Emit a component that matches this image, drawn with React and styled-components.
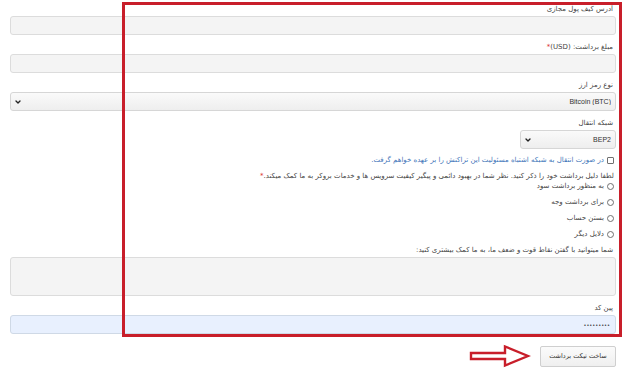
import styled, { createGlobalStyle } from "styled-components";
import { ChevronDown } from "lucide-react";

const GlobalStyle = createGlobalStyle`
  html, body {
    margin: 0;
    padding: 0;
    background: #ffffff;
  }
  body {
    font-family: "DejaVu Sans", "Noto Sans", sans-serif;
    width: 624px;
    height: 376px;
    overflow: hidden;
  }
  * { box-sizing: border-box; }
`;

const Page = styled.div`
  position: relative;
  width: 624px;
  height: 376px;
`;

const Form = styled.form`
  display: flex;
  flex-direction: column;
  padding: 3px 8px 0 10px;
  direction: rtl;
  font-size: 7px;
  color: #444;
`;

const Field = styled.div`
  display: flex;
  flex-direction: column;
  align-items: ${(p) => (p.$narrow ? "flex-start" : "stretch")};
  margin-bottom: ${(p) => p.$gap ?? 6}px;
`;

const Label = styled.label`
  display: block;
  height: 12px;
  line-height: 12px;
  margin-bottom: 1px;
  padding-right: 3px;
  white-space: nowrap;
`;

const Star = styled.span`
  color: #d9312a;
`;

const TextInput = styled.input`
  height: 19px;
  width: 100%;
  border: 1px solid #dcdcdc;
  border-radius: 3px;
  background: ${(p) => (p.$filled ? "#e8f0fe" : "#f4f4f4")};
  border-color: ${(p) => (p.$filled ? "#cfd9e6" : "#dcdcdc")};
  padding: 0 5px;
  font-family: inherit;
  font-size: ${(p) => (p.$filled ? "5px" : "7px")};
  color: #222;
  letter-spacing: 0;
  outline: none;
`;

const SelectWrap = styled.div`
  position: relative;
  width: ${(p) => p.$width || "100%"};
  height: 19px;
`;

const Select = styled.select`
  appearance: none;
  width: 100%;
  height: 100%;
  border: 1px solid #d6d6d6;
  border-radius: 3px;
  background: linear-gradient(#fafafa, #eeeeee);
  padding: 0 4px;
  font-family: "Liberation Sans", "DejaVu Sans", sans-serif;
  font-size: 7px;
  font-weight: normal;
  color: #333;
  outline: none;
`;

const Chevron = styled.span`
  position: absolute;
  left: 4px;
  top: 50%;
  transform: translateY(-50%);
  display: flex;
  color: #222;
  pointer-events: none;
`;

const CheckRow = styled.label`
  display: flex;
  align-items: center;
  gap: 3px;
  height: 12px;
  margin: 5px 0 5px;
  padding-right: 2px;
  color: #3d74b8;
`;

const Check = styled.input`
  appearance: none;
  width: 7px;
  height: 7px;
  margin: 0;
  border: 1px solid #707070;
  border-radius: 1px;
  background: #fff;
`;

const Question = styled.div`
  height: 10px;
  line-height: 10px;
  padding-right: 2px;
  white-space: nowrap;
`;

const RadioGroup = styled.div`
  display: flex;
  flex-direction: column;
  gap: 6px;
  margin-bottom: 5px;
`;

const RadioRow = styled.label`
  display: flex;
  align-items: center;
  gap: 3px;
  height: 10px;
  padding-right: 2px;
`;

const Radio = styled.input`
  appearance: none;
  width: 7px;
  height: 7px;
  margin: 0;
  border: 1px solid #707070;
  border-radius: 50%;
  background: #fff;
`;

const TextArea = styled.textarea`
  height: 39px;
  width: 100%;
  resize: none;
  border: 1px solid #dcdcdc;
  border-radius: 3px;
  background: #f4f4f4;
  outline: none;
`;

const Actions = styled.div`
  display: flex;
  align-items: center;
  gap: 9px;
  margin-top: 10px;
`;

const Button = styled.button`
  width: 76px;
  height: 21px;
  border: 1px solid #cfcfcf;
  border-radius: 2px;
  background: linear-gradient(#fbfbfb, #efefef);
  font-family: inherit;
  font-size: 6.5px;
  color: #333;
  padding: 0;
`;

const Highlight = styled.div`
  position: absolute;
  left: 122px;
  top: 2px;
  width: 500px;
  height: 335px;
  border: 3px solid #c81e2a;
  pointer-events: none;
`;

const Arrow = () => (
  <svg width="62" height="24" viewBox="0 0 62 24">
    <path
      d="M2 9 H36 V2.5 L59 12 L36 21.5 V15 H2 Z"
      fill="#ffffff"
      stroke="#c81e2a"
      strokeWidth="2.4"
      strokeLinejoin="miter"
    />
  </svg>
);

const reasons = [
  "به منظور برداشت سود",
  "برای برداشت وجه",
  "بستن حساب",
  "دلایل دیگر",
];

export default function App() {
  return (
    <Page>
      <GlobalStyle />
      <Form onSubmit={(e) => e.preventDefault()}>
        <Field>
          <Label>آدرس کیف پول مجازی</Label>
          <TextInput type="text" />
        </Field>
        <Field>
          <Label>
            مبلغ برداشت: (USD)<Star>*</Star>
          </Label>
          <TextInput type="text" />
        </Field>
        <Field>
          <Label>نوع رمز ارز</Label>
          <SelectWrap>
            <Select defaultValue="btc">
              <option value="btc">Bitcoin (BTC)</option>
            </Select>
            <Chevron>
              <ChevronDown size={8} strokeWidth={4} />
            </Chevron>
          </SelectWrap>
        </Field>
        <Field $narrow $gap={0}>
          <Label>شبکه انتقال</Label>
          <SelectWrap $width="96px">
            <Select defaultValue="bep2">
              <option value="bep2">BEP2</option>
            </Select>
            <Chevron>
              <ChevronDown size={8} strokeWidth={4} />
            </Chevron>
          </SelectWrap>
        </Field>
        <CheckRow>
          <Check type="checkbox" />
          در صورت انتقال به شبکه اشتباه مسئولیت این تراکنش را بر عهده خواهم گرفت.
        </CheckRow>
        <Question>
          لطفا دلیل برداشت خود را ذکر کنید. نظر شما در بهبود دائمی و پیگیر کیفیت
          سرویس ها و خدمات بروکر به ما کمک میکند.<Star>*</Star>
        </Question>
        <RadioGroup>
          {reasons.map((r) => (
            <RadioRow key={r}>
              <Radio type="radio" name="reason" />
              {r}
            </RadioRow>
          ))}
        </RadioGroup>
        <Field>
          <Label>شما میتوانید با گفتن نقاط قوت و ضعف ما، به ما کمک بیشتری کنید:</Label>
          <TextArea />
        </Field>
        <Field $gap={0}>
          <Label>پین کد</Label>
          <TextInput type="password" $filled defaultValue="123456789" />
        </Field>
        <Actions>
          <Button type="submit">ساخت تیکت برداشت</Button>
          <Arrow />
        </Actions>
      </Form>
      <Highlight />
    </Page>
  );
}
